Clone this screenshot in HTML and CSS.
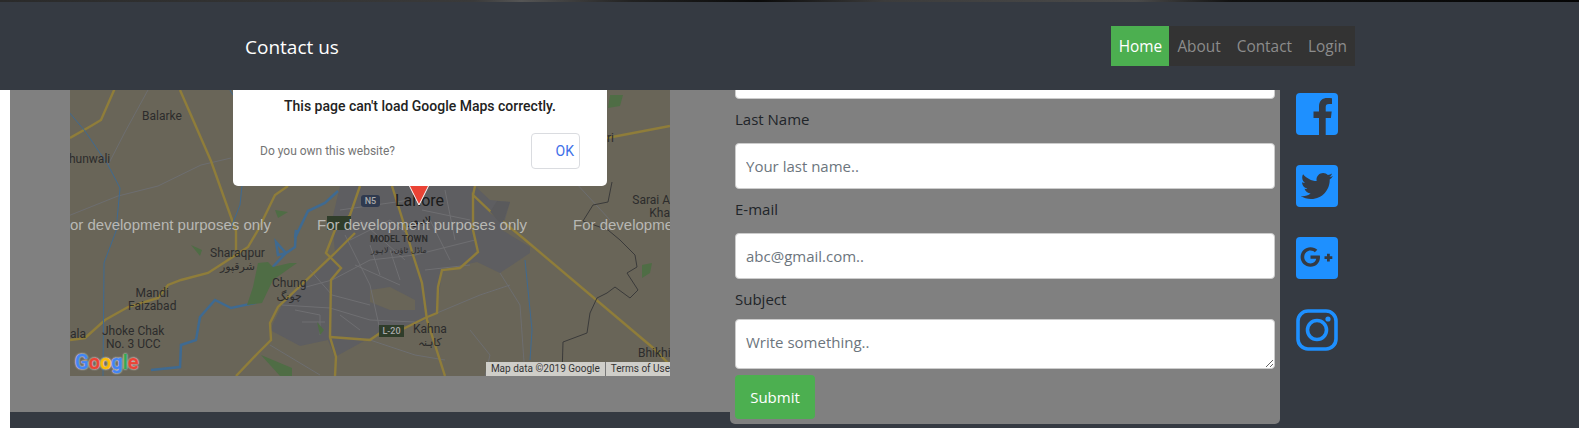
FILE: index.html
```html
<!DOCTYPE html>
<html lang="en">
<head>
<meta charset="utf-8">
<title>Contact us</title>
<link rel="stylesheet" href="styles.css">
</head>
<body>
<div class="strip"></div>
<header class="navbar">
  <div class="brand">Contact us</div>
  <nav class="menu">
    <a class="menu-link active">Home</a>
    <a class="menu-link">About</a>
    <a class="menu-link">Contact</a>
    <a class="menu-link">Login</a>
  </nav>
</header>
<main class="main">
  <section class="map-panel">
    <div class="map">
      <svg class="map-art" viewBox="0 0 600 286" width="600" height="286">
        <rect width="600" height="286" fill="#696558"/>
        <path d="M270 96 L405 96 L420 110 L440 112 L432 140 L460 157 L460 163 L430 183 L407 172 L372 180 L367 223 L352 232 L325 238 L305 245 L265 267 L258 250 L230 256 L200 240 L212 215 L265 163 L262 130 Z" fill="#5e5e61"/>
        <path d="M300 200 L320 197 L345 210 L345 220 L320 220 L300 212 Z" fill="#696558"/>
        <g fill="none" stroke="#6f6f72" stroke-width="1">
          <path d="M212 215 L260 218 L300 230 L345 232"/>
          <path d="M225 200 L262 190 L300 170 L345 165 L405 150"/>
          <path d="M240 180 L262 205 L300 215 M275 145 L300 195 L310 240"/>
          <path d="M280 150 L320 130 L345 150 M285 175 L330 195 M300 155 L310 185 M320 160 L330 190"/>
          <path d="M270 120 L340 110 M290 130 L335 170 M355 180 L400 175 M360 130 L380 170"/>
          <path d="M225 220 L250 225 L250 245 M232 232 L255 232 M270 225 L290 240"/>
          <path d="M352 120 L400 130 M375 100 L385 150"/>
        </g>
        <g fill="none" stroke="#6d6e70" stroke-width="1">
          <path d="M-2 126 L48 106 L88 96 L131 75 L161 68"/>
          <path d="M78 0 L55 42 L38 75"/>
          <path d="M200 255 L250 285 M430 183 L450 215 L455 286 M367 223 L410 205 L440 195 M300 250 L345 265 L375 270 M400 240 L420 265 L415 286"/>
          <path d="M505 92 L540 130"/>
        </g>
        <g fill="none" stroke="#8f7d3a" stroke-width="2.400">
          <path d="M45 -2 L31 30 L21 36 L0 48"/>
          <path d="M110 0 L141 71 L166 141 L166 160"/>
          <path d="M0 250 L15 248 L35 230 L58 217 L88 208 L98 195 L111 190 L138 183 L155 172 L178 157 L188 140 L205 105 L218 96"/>
          <path d="M290 96 L280 125 L265 140 L256 163 L271 178 L261 190 L260 247 L266 267 L265 286"/>
          <path d="M166 286 L188 263 L201 250 L200 233 L208 217 L265 163 L285 143"/>
          <path d="M260 247 L300 250 L310 243 M333 239 L355 228 L367 223 L368 197 L372 180 L390 178 L408 162 L403 140 L403 105 L420 121 L453 148 L582 257 L600 275"/>
          <path d="M322 96 L333 131 L343 165 L352 193 L357 230 L375 286"/>
          <path d="M537 48 L600 36"/>
          <path d="M405 96 L403 105"/>
        </g>
        <g fill="none" stroke="#3f6a91" stroke-width="1">
          <path d="M-2 21 L15 41 L38 75 L50 98 L46 141 L34 173 L33 286"/>
          <path d="M160 0 L165 8 M172 96 L170 115 L160 140"/>
          <path d="M455 170 L462 240 L460 270"/>
        </g>
        <g fill="none" stroke="#3f6a91" stroke-width="2.500">
          <path d="M268 101 L255 113 L238 121 L225 148 L226 140 L225 157 L216 163 L206 152 L208 165 L216 163 L198 182 L185 197 L185 213 L161 218 L145 210 L130 227 L126 250 L111 255 L110 277 L81 280"/>
        </g>
        <g fill="#4f6d45">
          <path d="M188 173 L198 172 L203 177 L220 173 L227 173 L203 190 L192 213 L177 215 L183 197 Z"/>
          <path d="M121 155 L132 160 L130 166 Z"/>
          <path d="M191 265 L222 278 L222 286 L210 286 Z"/>
          <path d="M572 175 L582 173 L580 183 L572 188 Z"/>
          <path d="M540 5 L553 5 L550 16 L538 18 Z"/>
          <path d="M205 120 L218 122 L208 128 Z"/>
          <path d="M247 232 L254 240 L250 245 Z"/>
        </g>
        <path d="M427 111 L440 112 L432 135 L420 122 Z" fill="#5a5a5c"/>
        <path d="M492 286 L493 252 L517 243 L520 223 L527 208 L537 203 L545 197 L560 208 L568 200 L557 183 L567 177 L565 165 L550 150 L538 140 L513 131 L523 115 L538 112 L542 92" fill="none" stroke="#3a3a3a" stroke-width="1"/>
      </svg>
      <span class="place p-balarke">Balarke</span>
      <span class="place p-hunwali">hunwali</span>
      <span class="place p-sharaqpur">Sharaqpur<br><span class="urdu">شرقپور</span></span>
      <span class="place p-mandi">Mandi<br>Faizabad</span>
      <span class="place p-chung">Chung<br><span class="urdu">چونگ</span></span>
      <span class="place p-jhoke">Jhoke Chak<br>No. 3 UCC</span>
      <span class="place p-ala">ala</span>
      <span class="place p-kahna">Kahna<br><span class="urdu">کاہنہ</span></span>
      <span class="place p-sarai">Sarai A<br>Kha</span>
      <span class="place p-ri">ri</span>
      <span class="place p-bhikhi">Bhikhi</span>
      <span class="place p-lahore">Lahore<br><span class="urdu">لاہور</span></span>
      <span class="place p-model">MODEL TOWN<br><span class="urdu">ماڈل ٹاؤن، لاہور</span></span>
      <span class="shield s-n5">N5</span>
      <span class="shield s-m2"></span>
      <span class="shield s-l20">L-20</span>
      <span class="dev d1">or development purposes only</span>
      <span class="dev d2">For development purposes only</span>
      <span class="dev d3">For developme</span>
      <div class="google"><span class="g-b">G</span><span class="g-r">o</span><span class="g-y">o</span><span class="g-b">g</span><span class="g-g">l</span><span class="g-r">e</span></div>
      <div class="attribution"><span class="attr-item">Map data ©2019 Google</span><span class="attr-item">Terms of Use</span></div>
      <svg class="pin" viewBox="0 0 20 20" width="20" height="20"><path d="M0 0 L10 20 L20 0 Z" fill="#ea4335"/><path d="M0 0 L10 20 L20 0" fill="none" stroke="#fff" stroke-width="1"/></svg>
      <div class="dialog">
        <p class="dialog-title">This page can't load Google Maps correctly.</p>
        <div class="dialog-row">
          <span class="dialog-own">Do you own this website?</span>
          <button class="dialog-ok" type="button">OK</button>
        </div>
      </div>
    </div>
  </section>
  <form class="contact-form">
    <input class="field field-first" type="text" placeholder="Your first name..">
    <label class="field-label">Last Name</label>
    <input class="field" type="text" placeholder="Your last name..">
    <label class="field-label">E-mail</label>
    <input class="field" type="text" placeholder="abc@gmail.com..">
    <label class="field-label field-label-tight">Subject</label>
    <textarea class="field field-area" placeholder="Write something.."></textarea>
    <button class="submit" type="button">Submit</button>
  </form>
  <aside class="social">
    <svg class="social-icon" viewBox="0 0 42 42"><rect width="42" height="42" rx="4" fill="#1e90ff"/><path d="M23 42V25h-5.500v-6.500H23v-5C23 7.500 26.500 5 31.500 5c2 0 3.500.2 4.500.3v5.700h-3c-2.500 0-3.300 1.200-3.300 3.200v4.300h6l-.8 6.500h-5.200v17z" fill="#353a42"/></svg>
    <svg class="social-icon" viewBox="0 0 42 42"><rect width="42" height="42" rx="4" fill="#1e90ff"/><path d="M37 11c-1.200.6-2.400.9-3.800 1.100 1.400-.8 2.400-2 2.900-3.600-1.300.7-2.700 1.300-4.200 1.600C30.700 8.800 29 8 27.100 8c-3.600 0-6.600 2.900-6.600 6.600 0 .5 0 1 .2 1.500C15.200 15.800 10.400 13.200 7.100 9.200c-.6 1-.9 2.100-.9 3.300 0 2.300 1.200 4.300 2.900 5.500-1.100 0-2.100-.3-3-.8v.1c0 3.200 2.300 5.800 5.300 6.400-.6.200-1.100.2-1.700.2-.4 0-.8 0-1.200-.1.8 2.600 3.300 4.500 6.100 4.600-2.200 1.800-5.100 2.800-8.200 2.800-.5 0-1 0-1.600-.1 2.900 1.900 6.400 3 10.100 3 12.100 0 18.800-10 18.800-18.800v-.8c1.300-.9 2.400-2.100 3.300-3.500z" fill="#353a42"/></svg>
    <svg class="social-icon" viewBox="0 0 42 42"><rect width="42" height="42" rx="4" fill="#1e90ff"/><path d="M14.500 13.500c2 0 3.400.8 4.300 1.700l2.500-2.500c-1.700-1.600-4-2.500-6.800-2.500C9 10.200 4.600 14.600 4.600 20s4.400 9.800 9.900 9.800c5.700 0 9.500-4 9.500-9.700 0-.7-.1-1.200-.2-1.700h-9.300v3.300h5.700c-.4 2.400-2.300 4.700-5.700 4.700-3.500 0-6.300-2.900-6.300-6.400s2.800-6.500 6.300-6.500z" fill="#353a42"/><path d="M31 16.800h2.800v2.500h2.500v2.700h-2.500v2.500H31V22h-2.500v-2.700H31z" fill="#353a42"/></svg>
    <svg class="social-icon" viewBox="0 0 42 42"><rect x="2" y="2" width="38" height="38" rx="10" fill="none" stroke="#1e90ff" stroke-width="3.600"/><circle cx="21" cy="21" r="9.500" fill="none" stroke="#1e90ff" stroke-width="3.600"/><circle cx="32" cy="10" r="2.600" fill="#1e90ff"/></svg>
  </aside>
</main>
</body>
</html>
```
FILE: styles.css
```css
* { box-sizing: border-box; }
html, body { margin: 0; padding: 0; }
body { background: #fff; height: 430px; overflow: hidden; font-family: "Open Sans", "Noto Sans", sans-serif; }
.strip { height: 2px; background: linear-gradient(90deg, #2a2a2a 0%, #3a3a3a 30%, #555 33%, #222 40%, #0a0a0a 48%, #3c3c3c 56%, #4a4a4a 72%, #111 78%, #050505 100%); }
.navbar { height: 88px; background: #353a42; display: flex; align-items: center; justify-content: space-between; padding: 0 224px 0 245px; position: relative; z-index: 2; }
.brand { color: #fff; font-size: 19px; padding-top: 2px; }
.menu { display: flex; height: 40px; background: #333; }
.menu-link { display: flex; align-items: center; justify-content: center; color: #8c8c8c; font-size: 15.400px; padding: 0 8px; }
.menu-link.active { background: #4caf50; color: #fff; width: 58px; }
.main { height: 338px; margin-left: 10px; background: #353a42; display: flex; align-items: flex-start; }
.map-panel { width: 720px; height: 322px; background: #808080; padding-left: 60px; }
.map { width: 600px; height: 286px; position: relative; overflow: hidden; background: #696558; font-family: Roboto, sans-serif; }
.map-art { display: block; }
.place { position: absolute; color: #2c2c2c; font-size: 12px; line-height: 13px; text-align: center; white-space: nowrap; }
.urdu { font-family: "DejaVu Sans", sans-serif; font-size: 11px; line-height: 13px; }
.p-balarke { left: 72px; top: 20px; }
.p-hunwali { left: -1px; top: 63px; }
.p-sharaqpur { left: 140px; top: 157px; }
.p-mandi { left: 58px; top: 197px; }
.p-chung { left: 202px; top: 187px; }
.p-jhoke { left: 32px; top: 235px; }
.p-ala { left: 0; top: 238px; }
.p-kahna { left: 343px; top: 233px; }
.p-sarai { left: 562px; top: 104px; text-align: right; width: 38px; }
.p-ri { left: 537px; top: 42px; }
.p-bhikhi { left: 568px; top: 257px; }
.p-lahore { left: 325px; top: 102px; font-size: 16px; line-height: 18px; color: #1a1a1a; }
.p-model { left: 300px; top: 144px; font-size: 9px; font-weight: 700; line-height: 11px; }
.p-model .urdu { font-size: 8px; font-weight: 400; line-height: 10px; }
.shield { position: absolute; color: #aaa; font-size: 9px; line-height: 12px; text-align: center; font-weight: 500; }
.s-n5 { left: 291px; top: 105px; width: 19px; background: #2f3a4f; border-radius: 3px; }
.s-m2 { left: 257px; top: 126px; width: 24px; height: 14px; background: #2f3d2a; }
.s-l20 { left: 309px; top: 235px; width: 25px; background: #2f3d2a; }
.dev { position: absolute; top: 126px; color: #b8b8b4; font-family: "Liberation Sans", sans-serif; font-size: 15px; line-height: 17px; white-space: nowrap; }
.d1 { left: 0; }
.d2 { left: 247px; }
.d3 { left: 503px; }
.google { position: absolute; left: 5px; top: 260px; font-family: Roboto, sans-serif; font-size: 20px; font-weight: 500; line-height: 24px; -webkit-text-stroke: 0.5px currentColor; text-shadow: 0 0 2px #c8c8c4, 0 0 2px #c8c8c4, 0 0 2px #c8c8c4; }
.g-b { color: #4285f4; }
.g-r { color: #ea4335; }
.g-y { color: #fbbc05; }
.g-g { color: #34a853; }
.attribution { position: absolute; right: 0; bottom: 0; height: 14px; display: flex; background: #cfcec9; color: #333; font-size: 10px; line-height: 14px; }
.attr-item { padding: 0 5px; white-space: nowrap; }
.attr-item + .attr-item { border-left: 1px solid #777; padding-right: 0; }
.pin { position: absolute; left: 339px; top: 95px; }
.dialog { position: absolute; left: 163px; top: 0; width: 374px; height: 96px; background: #fff; border-radius: 0 0 5px 5px; }
.dialog-title { position: absolute; left: 0; right: 0; top: 6px; margin: 0; text-align: center; color: #222; font-size: 14px; font-weight: 500; line-height: 20px; }
.dialog-row { position: absolute; left: 27px; right: 27px; top: 43px; display: flex; justify-content: space-between; align-items: center; }
.dialog-own { color: #757575; font-size: 12px; }
.dialog-ok { width: 49px; height: 36px; padding: 0 5px 0 0; text-align: right; color: #4070e8; background: #fff; border: 1px solid #dadce0; border-radius: 4px; font-family: Roboto, sans-serif; font-size: 14px; }
.contact-form { width: 550px; height: 334px; background: #808080; border-radius: 0 0 5px 5px; padding: 0 5px; overflow: hidden; display: flex; flex-direction: column; }
.field-label { color: #212529; font-size: 15px; line-height: 22px; height: 22px; margin: 9px 0 13px; }
.field-label-tight { margin-bottom: 9px; }
.field { width: 100%; height: 46px; flex: none; padding: 0 10px; border: 1px solid #ccc; border-radius: 4px; background: #fff; font-family: "Open Sans", sans-serif; font-size: 15px; display: block; }
.field::placeholder { color: #6c757d; opacity: 1; }
.field-first { margin-top: -37px; }
.field-area { height: 50px; padding: 11px 10px 5px; resize: vertical; margin-bottom: 6px; line-height: 22px; }
.submit { width: 80px; height: 44px; flex: none; border: 0; border-radius: 4px; background: #4caf50; color: #fff; font-family: "Open Sans", sans-serif; font-size: 15px; }
.social { padding: 3px 0 0 16px; display: flex; flex-direction: column; gap: 30px; }
.social-icon { width: 42px; height: 42px; display: block; }
```
